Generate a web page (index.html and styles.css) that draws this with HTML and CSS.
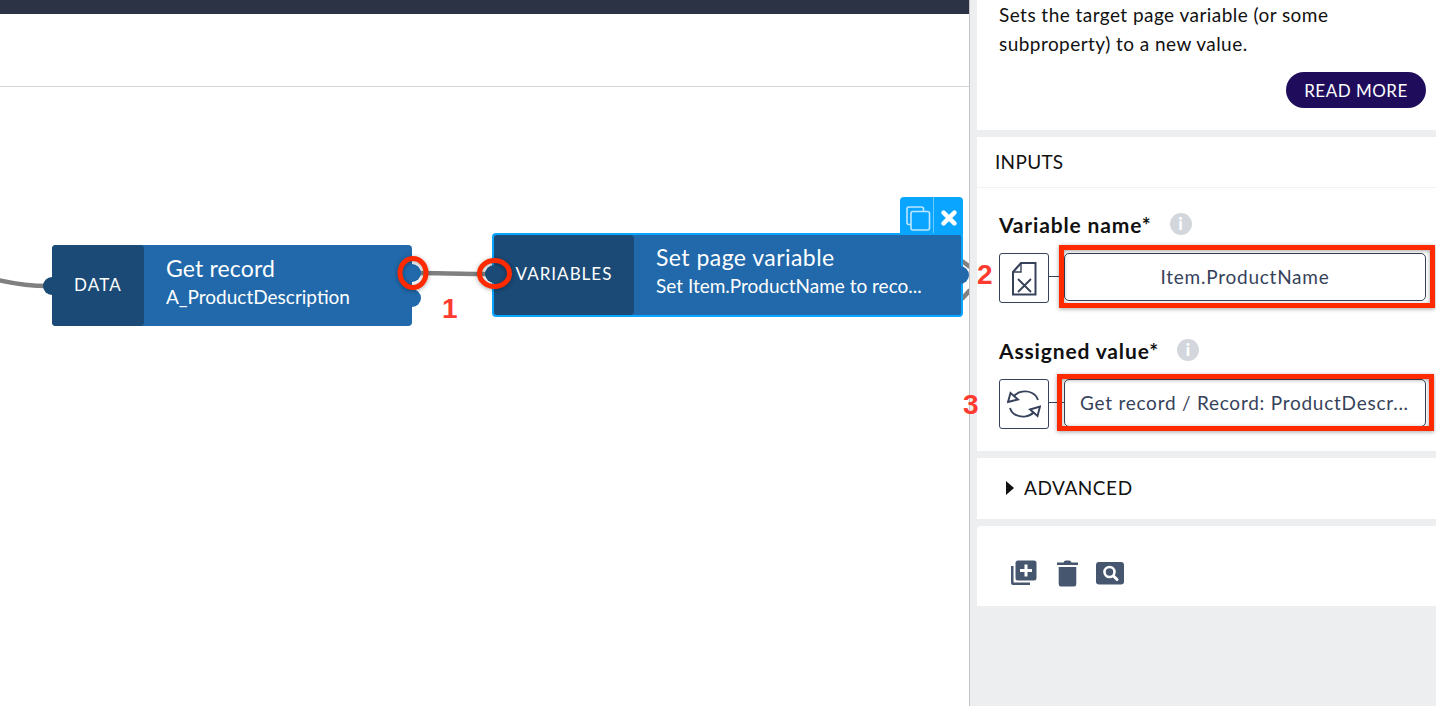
FILE: index.html
```html
<!DOCTYPE html>
<html lang="en">
<head>
    <meta charset="UTF-8">
    <title>Set page variable</title>
    <link rel="stylesheet" href="styles.css">
</head>
<body>
    <div class="app">
        <main class="editor">
            <div class="topbar"></div>
            <div class="toolbar"></div>
            <div class="canvas">
                <svg class="wires" width="969" height="619" viewBox="0 0 969 619">
                    <path d="M-2 193 C16 197 30 199 48 199" />
                    <path d="M412 186 C440 186 460 187 495 187" />
                    <path d="M962 174 L970 180" />
                    <path d="M962 212 L970 203" />
                </svg>

                <div class="node node-data">
                    <span class="port port-in"></span>
                    <div class="node-type">DATA</div>
                    <div class="node-body">
                        <div class="node-title">Get record</div>
                        <div class="node-sub">A_ProductDescription</div>
                    </div>
                    <span class="port port-out"></span>
                    <span class="port port-out2"></span>
                </div>

                <div class="node-tools">
                    <button class="tool tool-copy">
                        <svg width="25" height="25" viewBox="0 0 25 25" fill="none" stroke="#bfe6ff" stroke-width="1.6">
                            <path d="M5 18.5 H3 Q1 18.5 1 16.5 V3 Q1 1 3 1 H15.5 Q17.5 1 17.5 3 V5" />
                            <rect x="5" y="5.5" width="18.5" height="18.5" rx="2" />
                        </svg>
                    </button>
                    <button class="tool tool-close">
                        <svg width="16" height="16" viewBox="0 0 16 16" stroke="#fff" stroke-width="4.4" stroke-linecap="round">
                            <path d="M2.6 2.6 L13.4 13.4 M13.4 2.6 L2.6 13.4" />
                        </svg>
                    </button>
                </div>

                <div class="node node-variables">
                    <span class="port port-in"></span>
                    <div class="node-type">VARIABLES</div>
                    <div class="node-body">
                        <div class="node-title">Set page variable</div>
                        <div class="node-sub">Set Item.ProductName to reco...</div>
                    </div>
                    <span class="port port-out"></span>
                </div>
            </div>
        </main>

        <aside class="sidebar">
            <section class="panel panel-about">
                <p>Sets the target page variable (or some subproperty) to a new value.</p>
                <div class="about-actions">
                    <button class="read-more">READ MORE</button>
                </div>
            </section>

            <section class="panel panel-inputs">
                <h2 class="panel-heading">INPUTS</h2>
                <div class="field">
                    <div class="field-label">
                        <span>Variable name*</span>
                        <span class="info">i</span>
                    </div>
                    <div class="field-row">
                        <span class="type-box">
                            <svg width="26" height="35" viewBox="0 0 26 35" fill="none" stroke="#36425a" stroke-width="2">
                                <path d="M10 2 H24.5 V33.5 H2 V11 Z" />
                                <path d="M10 2 L10 11 L2 11" stroke-width="1.4" />
                                <path d="M7 18 L20 31 M20 18 L7 31" stroke-width="1.8" />
                            </svg>
                        </span>
                        <span class="type-link"></span>
                        <div class="value value-center">Item.ProductName</div>
                    </div>
                </div>
                <div class="field">
                    <div class="field-label">
                        <span>Assigned value*</span>
                        <span class="info">i</span>
                    </div>
                    <div class="field-row">
                        <span class="type-box">
                            <svg width="34" height="28" viewBox="0 0 34 28" fill="none" stroke="#36425a" stroke-width="1.9">
                                <path d="M7 6 C11 1.500 19 0 25 3 C28 4.500 30 7 31 10" />
                                <path d="M27 22 C23 26.500 15 28 9 25 C6 24 4 21 3 18" />
                                <path d="M1 12 L3.500 3 L11 9.500 Z" />
                                <path d="M33 16.500 L30.500 26 L23 19.500 Z" />
                            </svg>
                        </span>
                        <span class="type-link"></span>
                        <div class="value">Get record / Record: ProductDescr...</div>
                    </div>
                </div>
            </section>

            <section class="panel panel-advanced">
                <span class="caret"></span>
                <span>ADVANCED</span>
            </section>

            <section class="panel panel-actions">
                <svg width="27" height="26" viewBox="0 0 27 26" fill="#47566f">
                    <path d="M1 6 H3.500 V22.500 H20 V25 H3 Q1 25 1 23 Z" />
                    <path d="M8 0.500 H24 Q26.500 0.500 26.500 3 V18 Q26.500 20.500 24 20.500 H8 Q5.500 20.500 5.500 18 V3 Q5.500 0.500 8 0.500 Z M14.500 4.500 V9 H10 V12 H14.500 V16.500 H17.500 V12 H22 V9 H17.500 V4.500 Z" fill-rule="evenodd" />
                </svg>
                <svg width="21" height="27" viewBox="0 0 21 27" fill="#47566f">
                    <path d="M0 2.500 H6.500 Q7 0.500 9 0.500 H12 Q14 0.500 14.500 2.500 H21 V5 H0 Z" />
                    <path d="M1.700 7 H19.300 V24 Q19.300 26.500 17 26.500 H4 Q1.700 26.500 1.700 24 Z" />
                </svg>
                <svg class="action-search" width="28" height="23" viewBox="0 0 28 23">
                    <rect width="28" height="22.500" rx="3" fill="#47566f" />
                    <circle cx="13.500" cy="10" r="5" fill="none" stroke="#fff" stroke-width="2.600" />
                    <path d="M17.500 14 L21 17.500" stroke="#fff" stroke-width="3" stroke-linecap="round" />
                </svg>
            </section>
        </aside>

        <!-- red markup added on top of the screenshot -->
        <svg class="markup" width="1436" height="706" viewBox="0 0 1436 706" fill="none" stroke="#ff2a00">
            <ellipse cx="413" cy="273" rx="13" ry="14.500" stroke-width="5" />
            <ellipse cx="494.500" cy="273.500" rx="15" ry="13" stroke-width="5" />
            <rect x="1061.500" y="247.500" width="371" height="58" stroke-width="5" />
            <rect x="1059.500" y="376.500" width="372" height="52" stroke-width="5" />
        </svg>
        <span class="mark mark-1">1</span>
        <span class="mark mark-2">2</span>
        <span class="mark mark-3">3</span>
    </div>
</body>
</html>
```

FILE: styles.css
```css
* {
    box-sizing: border-box;
}
html, body {
    margin: 0;
    height: 100%;
    overflow: hidden;
}
body {
    font-family: Lato, "Open Sans", sans-serif;
    background-color: #fff;
}
.app {
    position: relative;
    display: flex;
    width: 1436px;
    height: 706px;
}
.editor {
    width: 970px;
    display: flex;
    flex-direction: column;
    border-right: 1px solid #c4c4c4;
}
.topbar {
    height: 14px;
    background-color: #2b3344;
}
.toolbar {
    height: 73px;
    border-bottom: 1px solid #d6d6d6;
}
.canvas {
    position: relative;
    flex: 1;
}
.wires {
    position: absolute;
    left: 0;
    top: 0;
    fill: none;
    stroke: #808080;
    stroke-width: 4.5;
}

/* nodes */
.node {
    position: absolute;
    display: flex;
    color: #fff;
    background-color: #2169aa;
    border-radius: 4px;
}
.node-data {
    left: 52px;
    top: 158px;
    width: 360px;
    height: 81px;
}
.node-variables {
    left: 492px;
    top: 146px;
    width: 471px;
    height: 84px;
    border: 2px solid #0aa5ff;
}
.node-type {
    display: flex;
    align-items: center;
    justify-content: center;
    font-size: 17px;
    letter-spacing: 1px;
    background-color: #1a4a75;
    border-radius: 4px;
    padding-bottom: 2px;
}
.node-data .node-type {
    width: 92px;
    letter-spacing: 1.2px;
}
.node-variables .node-type {
    width: 140px;
    padding-bottom: 4px;
}
.node-body {
    padding-left: 22px;
}
.node-title {
    font-size: 23px;
    line-height: 30px;
    margin-top: 8px;
    letter-spacing: .15px;
}
.node-sub {
    font-size: 19px;
    line-height: 28px;
}
.node-variables .node-title {
    margin-top: 7px;
    letter-spacing: .45px;
}
.port {
    position: absolute;
    width: 18px;
    height: 18px;
    border-radius: 50%;
    background-color: #2169aa;
}
.port-in {
    background-color: #1a4a75;
    left: -9px;
    top: 32px;
}
.port-out {
    right: -9px;
    top: 19px;
}
.port-out2 {
    right: -9px;
    top: 44px;
}
.node-variables .port-in {
    left: -9px;
    top: 30px;
    z-index: 1;
}
.node-variables .port-out {
    right: -8px;
    top: 31px;
}
.node-tools {
    position: absolute;
    left: 900px;
    top: 110px;
    width: 63px;
    height: 38px;
    display: flex;
    background-color: #0aa5ff;
    border-radius: 4px 4px 0 0;
}
.tool {
    padding: 0;
    border: none;
    background: none;
    display: flex;
    justify-content: center;
    padding-top: 9px;
}
.tool-copy {
    width: 34px;
    padding-left: 4px;
    border-right: 1px solid #6cc8fc;
}
.tool-close {
    flex: 1;
    padding-top: 13px;
}

/* sidebar */
.sidebar {
    flex: 1;
    padding-left: 7px;
    background-color: #edeef0;
    display: flex;
    flex-direction: column;
    gap: 7px;
    color: #111;
}
.panel {
    background-color: #fff;
}
.panel-about {
    height: 130px;
    padding: 0 10px 0 22px;
}
.panel-about p {
    margin: 0;
    font-size: 19px;
    line-height: 29px;
    width: 380px;
    letter-spacing: .45px;
}
.about-actions {
    display: flex;
    justify-content: flex-end;
    margin-top: 14px;
}
.read-more {
    width: 140px;
    height: 36px;
    border: none;
    border-radius: 18px;
    background-color: #1f0d5c;
    color: #fff;
    font-family: inherit;
    font-size: 17px;
    letter-spacing: .5px;
}
.panel-inputs {
    height: 314px;
}
.panel-heading {
    margin: 0 0 22px;
    height: 51px;
    padding-left: 18px;
    font-size: 19px;
    font-weight: 400;
    line-height: 49px;
    letter-spacing: .3px;
    border-bottom: 1px solid #f2f2f2;
}
.field {
    padding: 0 10px 0 22px;
    margin-bottom: 33px;
}
.field-label {
    display: flex;
    align-items: center;
    gap: 18px;
    height: 30px;
    padding-bottom: 2px;
    margin-bottom: 13px;
    font-size: 21px;
    font-weight: 700;
    letter-spacing: .85px;
}
.info {
    width: 22px;
    height: 22px;
    border-radius: 50%;
    background-color: #d3d7dd;
    color: #fff;
    font-size: 17px;
    font-weight: 900;
    line-height: 22px;
    letter-spacing: 0;
    text-align: center;
}
.field-row {
    display: flex;
    align-items: flex-start;
}
.type-box {
    width: 50px;
    height: 50px;
    display: flex;
    align-items: center;
    justify-content: center;
    border: 1px solid #36425a;
    border-radius: 3px;
}
.type-link {
    width: 15px;
    height: 1px;
    margin-top: 23px;
    background-color: #36425a;
}
.value {
    flex: 1;
    height: 48px;
    padding-left: 15px;
    border: 1px solid #36425a;
    border-radius: 5px;
    color: #36425a;
    font-size: 19px;
    line-height: 45px;
    letter-spacing: .75px;
    white-space: nowrap;
}
.value-center {
    text-align: center;
    padding-left: 0;
}
.panel-advanced {
    height: 61px;
    display: flex;
    align-items: center;
    padding: 0 0 2px 29px;
    gap: 10px;
    font-size: 19px;
    letter-spacing: .55px;
}
.caret {
    border-left: 8px solid #111;
    border-top: 7px solid transparent;
    border-bottom: 7px solid transparent;
}
.panel-actions {
    height: 80px;
    display: flex;
    align-items: center;
    padding: 14px 0 0 33px;
    gap: 20px;
    border-radius: 4px 0 0 0;
}
.action-search {
    margin-left: -2px;
}

/* red markup */
.markup {
    position: absolute;
    left: 0;
    top: 0;
    pointer-events: none;
    filter: drop-shadow(0 1px 2px rgba(0, 0, 0, .35));
}
.mark {
    position: absolute;
    color: #ff3b30;
    font-family: "Liberation Sans", Arial, sans-serif;
    font-size: 28px;
    font-weight: 700;
    line-height: 32px;
}
.mark-1 {
    left: 442px;
    top: 293px;
}
.mark-2 {
    left: 977px;
    top: 259px;
}
.mark-3 {
    left: 963px;
    top: 389px;
}
```
